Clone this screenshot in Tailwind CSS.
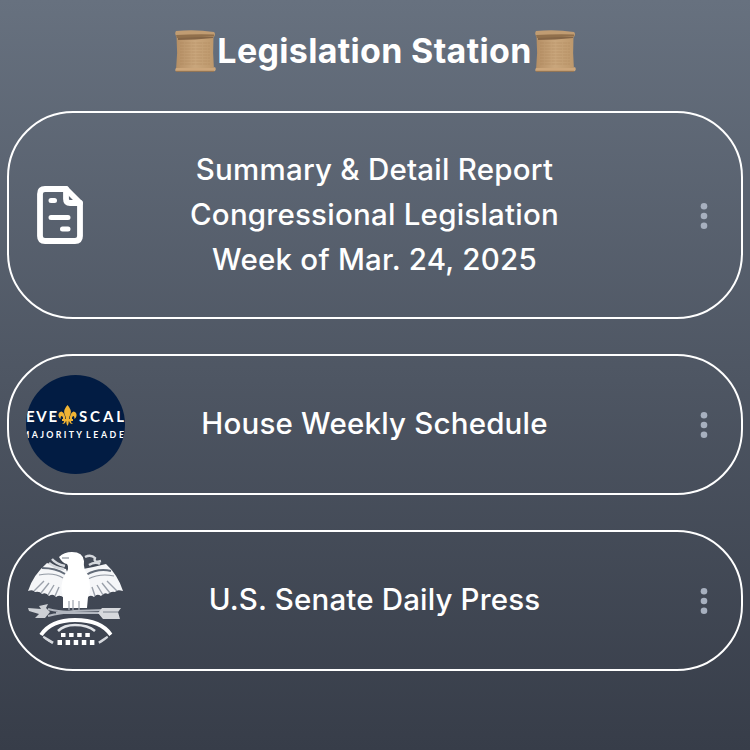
<!DOCTYPE html>
<html lang="en">
<head>
    <meta charset="UTF-8">
    <meta name="viewport" content="width=device-width, initial-scale=1.0">
    <title>Legislation Station</title>
    <script src="https://cdn.jsdelivr.net/npm/@tailwindcss/browser@4"></script>
</head>
<body class="min-h-screen overflow-hidden bg-linear-to-b from-[#67717f] to-[#373d49] font-['Inter',sans-serif] text-white">
    <!-- Shared drawings -->
    <svg class="absolute size-0">
        <defs>
            <linearGradient id="paper" x1="0" y1="0" x2="1" y2="0">
                <stop offset="0" stop-color="#b58f65" />
                <stop offset="0.5" stop-color="#c9a67c" />
                <stop offset="1" stop-color="#bd986c" />
            </linearGradient>
            <symbol id="scroll" viewBox="0 0 42 44">
                <path d="M1.500 7 Q3 24 1 41 H39 Q37.500 24 38.500 7Z" fill="url(#paper)" />
                <path d="M3 8 H38 V9 Q20 11 3 11Z" fill="#846546" />
                <path d="M1 2 Q20 0 39 3 Q41 5 39 8 Q20 7 2 8 Q-1 5 1 2Z" fill="#c09c72" />
                <path d="M1 6 Q20 5 39 5.500 L39 7.500 Q20 8 2 9Z" fill="#91704c" />
                <path d="M5 14H35M5 17H35M5 20H35M5 23H35M5 26H35M5 29H35M5 32H35M5 35H35" stroke="#a57e53" stroke-width="0.8" stroke-dasharray="4 0.7 6 0.8" opacity="0.4" />
                <path d="M1 39 H38 L40 38 Q42 41 39 42.500 H1 Q-0.500 41 1 39Z" fill="#cca67b" />
                <path d="M1 42.300H39" stroke="#8f6a43" stroke-width="0.8" />
            </symbol>
            <symbol id="dots" viewBox="0 0 8 28">
                <g fill="#a7b0bf">
                    <circle cx="4" cy="4.200" r="3.300" />
                    <circle cx="4" cy="14" r="3.300" />
                    <circle cx="4" cy="23.800" r="3.300" />
                </g>
            </symbol>
        </defs>
    </svg>

    <header class="flex h-[111px] items-start justify-center pt-[29px] pl-[2px]">
        <svg class="h-11 w-[42px]"><use href="#scroll" /></svg>
        <h1 class="text-[34px] leading-[44px] font-bold tracking-[0.32px] whitespace-nowrap">Legislation Station</h1>
        <svg class="ml-[3px] h-11 w-[42px]"><use href="#scroll" /></svg>
    </header>

    <main class="flex flex-col gap-[35px] px-[7px]">
        <!-- Weekly report -->
        <a class="flex h-[208px] items-center rounded-[66px] border-2 border-white">
            <div class="w-[117px] pl-[26.5px]">
                <svg class="h-[60px] w-12" viewBox="0 0 48 60" fill="none" stroke="white" stroke-width="5.800" stroke-linecap="round" stroke-linejoin="round">
                    <path d="M30 4H9Q4 4 4 9V51Q4 56 9 56H39Q44 56 44 51V18Z" />
                    <path d="M30 4V14Q30 18 34 18H44" />
                    <path d="M15 15.500H18.500M15 32.500H32M26.500 44H32" stroke-width="5" />
                </svg>
            </div>
            <p class="-mt-[2px] flex-1 text-center text-[29.5px] leading-[45px] font-medium tracking-[0.23px] whitespace-nowrap">Summary &amp; Detail Report<br>Congressional Legislation<br>Week of Mar. 24, 2025</p>
            <div class="flex w-[118px] justify-end pt-[2px] pr-[33px]">
                <svg class="h-7 w-2"><use href="#dots" /></svg>
            </div>
        </a>

        <!-- House schedule -->
        <a class="flex h-[141px] items-center rounded-[66px] border-2 border-white">
            <div class="w-[117px] pl-[16.5px]">
                <svg class="size-[99px] rounded-full bg-[#021c43]" viewBox="0 0 99 99">
                    <g fill="white" font-family="Lato, sans-serif" font-weight="700">
                        <text x="0" y="47" font-size="15" textLength="31" lengthAdjust="spacing">EVE</text>
                        <text x="53" y="47" font-size="15" textLength="45" lengthAdjust="spacing">SCAL</text>
                        <text x="-5" y="62.500" font-size="8.800" textLength="61" lengthAdjust="spacing">MAJORITY</text>
                        <text x="60" y="62.500" font-size="8.800" textLength="38" lengthAdjust="spacing">LEADE</text>
                    </g>
                    <g fill="#f1b434">
                        <path d="M41.500 30Q46 35 44.500 39Q43 42 42.700 45H40.300Q40 42 38.500 39Q37 35 41.500 30Z" />
                        <path d="M39.500 45Q39 37.500 35.500 36.500Q32 37 32.500 41Q33 43 34.500 44Q34.500 40.500 36 41Q37.500 42 37 45Z" />
                        <path d="M43.500 45Q44 37.500 47.500 36.500Q51 37 50.500 41Q50 43 48.500 44Q48.500 40.500 47 41Q45.500 42 46 45Z" />
                        <path d="M36 44H47V46H36Z" />
                        <path d="M40.200 46H42.800Q42.800 49 41.500 51Q40.200 49 40.200 46ZM38 46H40Q39 49.500 36 49Q38 48.500 38 46ZM43 46H45Q45 48.500 47 49Q44 49.500 43 46Z" />
                    </g>
                </svg>
            </div>
            <p class="-mt-[3px] flex-1 text-center text-[29.5px] leading-[45px] font-medium tracking-[0.2px] whitespace-nowrap">House Weekly Schedule</p>
            <div class="flex w-[118px] justify-end pr-[33px]">
                <svg class="h-7 w-2"><use href="#dots" /></svg>
            </div>
        </a>

        <!-- Senate press -->
        <a class="flex h-[141px] items-center rounded-[66px] border-2 border-white">
            <div class="w-[117px] pl-[16.5px]">
                <svg class="size-[99px] rounded-full" viewBox="0 0 99 99" fill="none">
                    <!-- wings -->
                    <path d="M40 18Q30 16 21 12Q7 24 2 40Q7 38 9 41Q14 40 16 43Q20 41 23 45Q27 42 30 46Q34 43 38 47L46 34Z" fill="#f5f6f8" />
                    <path d="M57 18Q68 16 80 13Q92 24 97 40Q91 38 89 41Q85 40 82 43Q78 41 75 45Q71 42 68 46Q64 43 61 47L54 34Z" fill="#f5f6f8" />
                    <path d="M16 17Q30 17 39 23M60 24Q72 17 85 20" stroke="#626b78" stroke-width="2" />
                    <path d="M13 24Q28 21 37 27M62 28Q74 22 88 25" stroke="#9299a3" stroke-width="1.200" />
                    <path d="M8 40L18 30M15 42L23 32M22 44L28 34M29 45L33 36M91 40L81 30M84 42L76 32M77 44L71 34M69 45L66 36" stroke="#9aa0aa" stroke-width="1.400" />
                    <!-- head and body -->
                    <path d="M33 6Q38 1 46 1Q57 1 58 10Q57 18 62 24Q66 36 62 46L61 57H37V46Q33 34 39 24Q44 17 41 13Q37 13 33 6Z" fill="white" />
                    <path d="M26 8Q30 13 39 15M23 12Q29 17 38 18M59 6Q65 3 69 7Q67 12 75 10M63 14Q69 10 74 13" stroke="#d5d8dd" stroke-width="2.400" />
                    <path d="M36 7H43" stroke="#727a86" stroke-width="1.200" />
                    <path d="M43 50V59M47 49V59M53 50V59" stroke="#a3a9b2" stroke-width="1.300" />
                    <!-- arrows and branch -->
                    <path d="M22 58Q39 62 48 60L79 59M22 65Q40 60 51 62L79 62M30 62H78" stroke="#b2b7bf" stroke-width="2" />
                    <path d="M2 57L15 58L13 55L22 53L20 57L24 61L19 67L9 67L13 63L3 60Z" fill="#cdd0d5" />
                    <path d="M76 57L95 57L92 61L94 68H77L72 62Z" fill="#d7d9dd" />
                    <path d="M77 61H92" stroke="#7a818c" />
                    <!-- shield -->
                    <path d="M15 84Q25 69 49 69Q75 69 85 84" stroke="white" stroke-width="4" />
                    <path d="M32 80Q38 74 49 74Q62 74 69 80" stroke="#e1e4e8" stroke-width="2.500" />
                    <path d="M35 84H64" stroke="white" stroke-width="4" stroke-dasharray="4.500 3.600" />
                    <path d="M31.500 91.500H69" stroke="white" stroke-width="5" stroke-dasharray="4.500 3.600" />
                    <path d="M17 86L27 92M82 86L73 92" stroke="#d3d6db" stroke-width="3" />
                </svg>
            </div>
            <p class="-mt-[3px] flex-1 text-center text-[29.5px] leading-[45px] font-medium tracking-[0.15px] whitespace-nowrap">U.S. Senate Daily Press</p>
            <div class="flex w-[118px] justify-end pr-[33px]">
                <svg class="h-7 w-2"><use href="#dots" /></svg>
            </div>
        </a>
    </main>
</body>
</html>
